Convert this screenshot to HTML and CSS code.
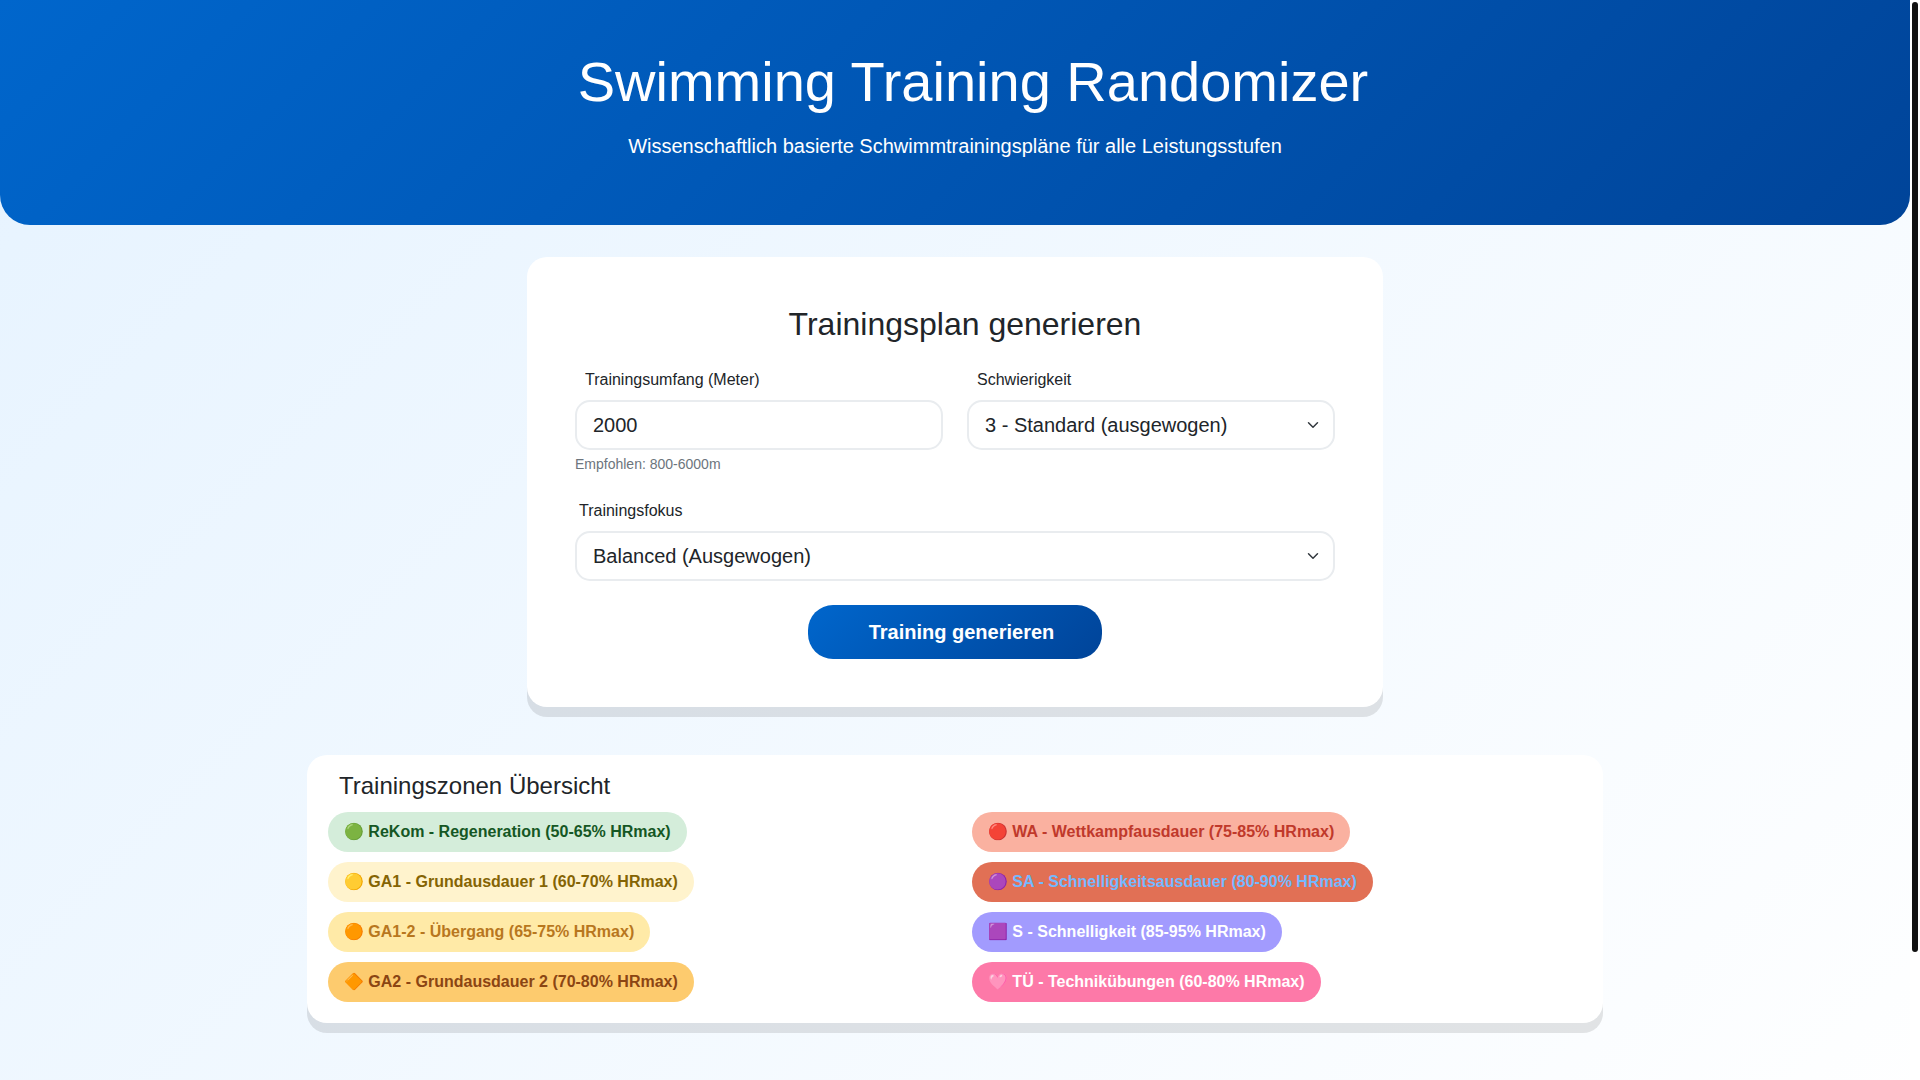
FILE: index.html
```html
<!DOCTYPE html>
<html lang="de">
<head>
<meta charset="utf-8">
<meta name="viewport" content="width=device-width, initial-scale=1">
<title>Swimming Training Randomizer</title>
<link rel="stylesheet" href="styles.css">
</head>
<body>
<div class="page">
  <header class="hero">
    <h1 class="hero-title">Swimming Training Randomizer</h1>
    <p class="hero-lead">Wissenschaftlich basierte Schwimmtrainingspläne für alle Leistungsstufen</p>
  </header>
  <main class="container">
    <section class="card generator">
      <h2 class="generator-title">Trainingsplan generieren</h2>
      <form class="generator-form">
        <div class="field">
          <label class="label" for="distance">Trainingsumfang (Meter)</label>
          <input class="control" id="distance" type="text" inputmode="numeric" value="2000" aria-describedby="distance-help">
          <small class="help" id="distance-help">Empfohlen: 800-6000m</small>
        </div>
        <div class="field">
          <label class="label" for="level">Schwierigkeit</label>
          <select class="control select" id="level">
            <option>3 - Standard (ausgewogen)</option>
          </select>
        </div>
        <div class="field field-wide">
          <label class="label label-near" for="focus">Trainingsfokus</label>
          <select class="control select" id="focus">
            <option>Balanced (Ausgewogen)</option>
          </select>
        </div>
        <button class="submit" type="button">Training generieren</button>
      </form>
    </section>
    <section class="card zones">
      <h4 class="zones-title">Trainingszonen Übersicht</h4>
      <div class="zones-grid">
        <div class="zones-column">
          <span class="badge rekom">🟢 ReKom - Regeneration (50-65% HRmax)</span>
          <span class="badge ga1">🟡 GA1 - Grundausdauer 1 (60-70% HRmax)</span>
          <span class="badge ga12">🟠 GA1-2 - Übergang (65-75% HRmax)</span>
          <span class="badge ga2">🔶 GA2 - Grundausdauer 2 (70-80% HRmax)</span>
        </div>
        <div class="zones-column">
          <span class="badge wa">🔴 WA - Wettkampfausdauer (75-85% HRmax)</span>
          <span class="badge sa">🟣 SA - Schnelligkeitsausdauer (80-90% HRmax)</span>
          <span class="badge s">🟪 S - Schnelligkeit (85-95% HRmax)</span>
          <span class="badge tu">🩷 TÜ - Technikübungen (60-80% HRmax)</span>
        </div>
      </div>
    </section>
  </main>
</div>
<div class="scrollbar" aria-hidden="true"><div class="scrollbar-thumb"></div></div>
</body>
</html>
```
FILE: styles.css
```css
*, *::before, *::after { box-sizing: border-box; }

body {
  margin: 0;
  display: flex;
  min-height: 100vh;
  font-family: "Liberation Sans", Arial, "Noto Color Emoji", sans-serif;
  font-size: 16px;
  line-height: 24px;
  color: #212529;
  background: #fff;
}

h1, h2, h4, p { margin: 0; font-weight: 400; }

.page {
  flex: 1;
  background: linear-gradient(135deg, #e6f3ff 0%, #fff 105%);
}

.hero {
  padding: 48px 48px 64px;
  text-align: center;
  color: #fff;
  background: linear-gradient(135deg, #0066cc, #004499);
  border-radius: 0 0 30px 30px;
}
.hero-title {
  margin-bottom: 16px;
  padding-left: 36px;
  font-size: 56px;
  line-height: 67px;
}
.hero-lead { font-size: 20px; line-height: 30px; }

.container {
  display: flex;
  flex-direction: column;
  align-items: center;
  gap: 48px;
  max-width: 1320px;
  margin: 0 auto;
  padding: 32px 12px 48px;
}

.card {
  width: 100%;
  background: #fff;
  border-radius: 20px;
  box-shadow: 0 10px 0 rgba(0, 0, 0, 0.1);
}

.generator { max-width: 856px; padding: 48px; }
.generator-title {
  margin-bottom: 24px;
  padding-left: 20px;
  font-size: 32px;
  line-height: 39px;
  text-align: center;
}
.generator-form {
  display: grid;
  grid-template-columns: 1fr 1fr;
  gap: 24px;
}
.field { display: flex; flex-direction: column; }
.field-wide { grid-column: 1 / -1; }
.label { margin-bottom: 8px; padding-left: 10px; }
.label-near { padding-left: 4px; }
.control {
  width: 100%;
  height: 50px;
  margin: 0;
  padding: 8px 16px;
  font: inherit;
  font-size: 20px;
  line-height: 30px;
  color: inherit;
  background: #fff;
  border: 2px solid #e9ecef;
  border-radius: 15px;
}
.select {
  appearance: none;
  background: #fff url("data:image/svg+xml,%3Csvg xmlns='http://www.w3.org/2000/svg' viewBox='0 0 16 16'%3E%3Cpath fill='none' stroke='%23343a40' stroke-linecap='round' stroke-linejoin='round' stroke-width='2' d='m2 5 6 6 6-6'/%3E%3C/svg%3E") no-repeat right 12px center / 16px 12px;
}
.help {
  margin-top: 4px;
  font-size: 14px;
  line-height: 21px;
  color: #6c757d;
}
.submit {
  grid-column: 1 / -1;
  justify-self: center;
  padding: 12px 48px 12px 61px;
  font: inherit;
  font-size: 20px;
  font-weight: 700;
  line-height: 30px;
  color: #fff;
  background: linear-gradient(135deg, #0066cc, #004499);
  border: 0;
  border-radius: 25px;
}

.zones { padding: 16px 16px 21px; }
.zones-title {
  margin-bottom: 12px;
  padding-left: 16px;
  font-size: 24px;
  line-height: 29px;
}
.zones-grid {
  display: grid;
  grid-template-columns: 1fr 1fr;
  gap: 24px;
}
.zones-column {
  display: flex;
  flex-direction: column;
  align-items: flex-start;
  gap: 10px;
  padding-left: 5px;
}
.badge {
  padding: 8px 16px;
  font-weight: 700;
  border-radius: 20px;
}
.rekom { background: #d4edda; color: #155724; }
.ga1 { background: #fff3cd; color: #856404; }
.ga12 { background: #ffeaa7; color: #b8771e; }
.ga2 { background: #fdcb6e; color: #8b4513; }
.wa { background: #fab1a0; color: #c0392b; }
.sa { background: #e17055; color: #74b9ff; }
.s { background: #a29bfe; color: #fff; }
.tu { background: #fd79a8; color: #fff; }

.scrollbar {
  flex: none;
  width: 10px;
  padding: 2px;
}
.scrollbar-thumb {
  position: sticky;
  top: 2px;
  height: 88vh;
  border-radius: 3px;
  background: #111;
}
```
